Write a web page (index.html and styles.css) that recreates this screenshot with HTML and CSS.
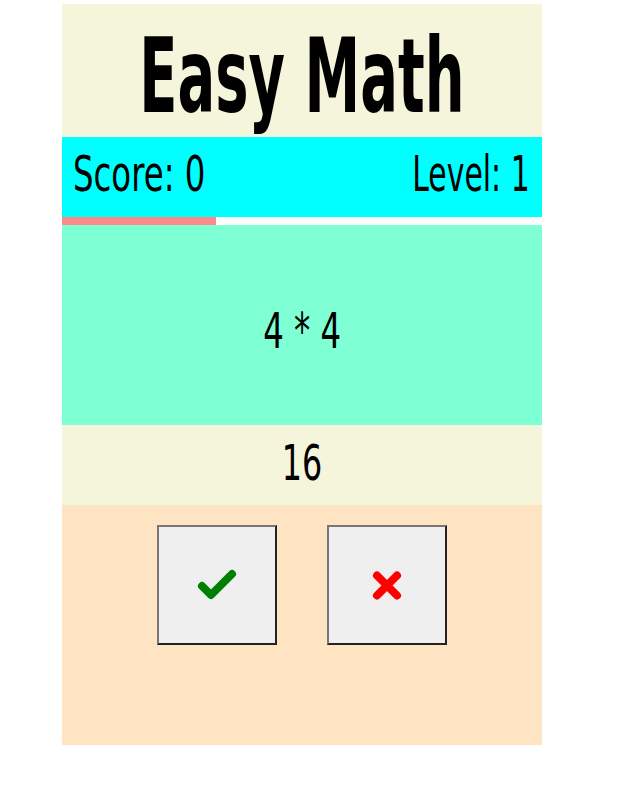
FILE: index.html
```html
<!DOCTYPE html>
<html>
<head>
<meta charset="utf-8">
<title>Easy Math</title>
<link rel="stylesheet" href="styles.css">
</head>
<body>
<div class="app">
  <header class="title-bar">
    <h1 class="title"><span class="squeeze">Easy Math</span></h1>
  </header>
  <div class="status-bar">
    <span class="stat"><span class="squeeze-sm left">Score: 0</span></span>
    <span class="stat"><span class="squeeze-sm right">Level: 1</span></span>
  </div>
  <div class="timer"><div class="timer-fill" style="width:154px"></div></div>
  <div class="question"><span class="squeeze-sm">4 * 4</span></div>
  <div class="answer"><span class="squeeze-sm">16</span></div>
  <div class="controls">
    <button class="btn" type="button" aria-label="Correct">
      <svg width="40" height="32" viewBox="0 0 40 32"><polyline points="5,17 14,26 35,5" fill="none" stroke="#008000" stroke-width="8" stroke-linecap="round" stroke-linejoin="round"/></svg>
    </button>
    <button class="btn" type="button" aria-label="Wrong">
      <svg width="30" height="31" viewBox="0 0 30 31"><path d="M5,5.5 L25,25.5 M25,5.5 L5,25.5" fill="none" stroke="#ff0000" stroke-width="8" stroke-linecap="round"/></svg>
    </button>
  </div>
</div>
</body>
</html>
```
FILE: styles.css
```css
html, body {
  margin: 0;
  padding: 0;
  background: #ffffff;
}
body {
  padding-top: 4px;
  font-family: "DejaVu Sans Condensed", "DejaVu Sans", sans-serif;
  color: #000;
}
.app {
  width: 480px;
  margin-left: 62px;
  display: flex;
  flex-direction: column;
}
.title-bar {
  height: 133px;
  background: #f5f5dc;
  display: flex;
  align-items: center;
  justify-content: center;
  overflow: hidden;
}
.title {
  margin: 0;
  font-size: 104px;
  font-weight: bold;
  line-height: 1;
  white-space: nowrap;
  padding-top: 10px;
}
.squeeze {
  display: inline-block;
  transform: scaleX(0.598);
}
.squeeze-sm {
  display: inline-block;
  white-space: nowrap;
  transform: scaleX(0.72);
}
.squeeze-sm.left {
  transform-origin: left center;
}
.squeeze-sm.right {
  transform-origin: right center;
  transform: scaleX(0.665);
}
.status-bar {
  height: 80px;
  background: #00ffff;
  display: flex;
  align-items: center;
  justify-content: space-between;
  padding: 0 12px 6px 11px;
  box-sizing: border-box;
  font-size: 50px;
  line-height: 1;
}
.timer {
  height: 8px;
  background: #ffffff;
  display: flex;
}
.timer-fill {
  height: 8px;
  background: #ff8888;
}
.question {
  height: 200px;
  background: #7fffd4;
  display: flex;
  align-items: center;
  justify-content: center;
  font-size: 50px;
  line-height: 1;
  padding-top: 12px;
  box-sizing: border-box;
}
.answer {
  height: 80px;
  background: #f5f5dc;
  display: flex;
  align-items: center;
  justify-content: center;
  font-size: 49px;
  line-height: 1;
  padding-bottom: 4px;
  box-sizing: border-box;
}
.controls {
  height: 240px;
  background: #ffe4c4;
  display: flex;
  justify-content: center;
  align-items: flex-start;
  gap: 50px;
  padding-top: 20px;
  box-sizing: border-box;
}
.btn {
  width: 120px;
  height: 120px;
  margin: 0;
  padding: 0;
  background: #efefef;
  border: 2px solid;
  border-color: #767676 #222222 #222222 #767676;
  display: flex;
  align-items: center;
  justify-content: center;
}
.btn svg {
  display: block;
}
```
